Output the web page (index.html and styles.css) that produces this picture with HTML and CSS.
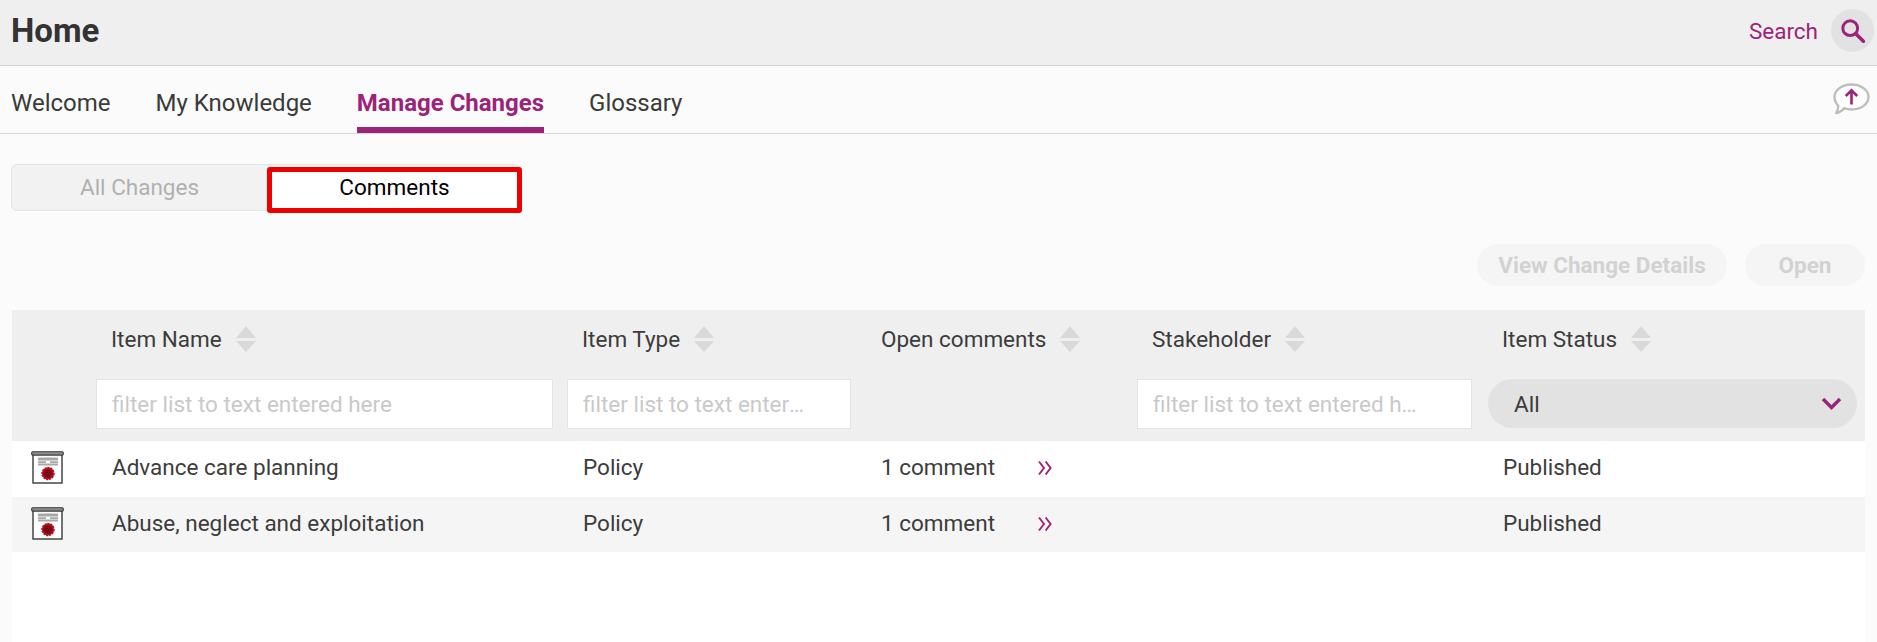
FILE: index.html
```html
<!DOCTYPE html>
<html lang="en">
<head>
<meta charset="utf-8">
<title>Home</title>
<link rel="stylesheet" href="styles.css">
</head>
<body>
<svg class="defs" width="0" height="0" aria-hidden="true">
  <symbol id="sort" viewBox="0 0 20 26">
    <path d="M10 0 L20 12 H0 Z M0 15 H20 L10 26 Z" fill="#d9d9d9"/>
  </symbol>
  <symbol id="doc" viewBox="0 0 33 33">
    <rect x="2" y="3" width="29" height="29" fill="#fff" stroke="#3a3a3a" stroke-width="1.4"/>
    <rect x="0.7" y="0.7" width="31.6" height="3.4" rx="1" fill="#8f8f8f" stroke="#3a3a3a" stroke-width="1.1"/>
    <path d="M7 6.5H27V9.4H7ZM7 10.2H15V12H7ZM19 10.2H27V12H19ZM7 12.4H27V14.6H7Z" fill="#a8a8a8"/>
    <circle cx="17" cy="22.5" r="6" fill="#b01020" stroke="#b01020" stroke-width="1.4" stroke-dasharray="2 1"/>
    <circle cx="17" cy="22.5" r="4.2" fill="#7d0a12"/>
  </symbol>
  <symbol id="more" viewBox="0 0 14 14">
    <path d="M1 .5 L6 7 L1 13.5 M7.6 .5 L12.6 7 L7.6 13.5" fill="none" stroke="#9b2379" stroke-width="1.9"/>
  </symbol>
</svg>

<header class="topbar">
  <h1 class="title">Home</h1>
  <div class="search">
    <span class="search-label">Search</span>
    <span class="search-btn">
      <svg width="26" height="26" viewBox="0 0 26 26" fill="none" stroke="#9b2379" stroke-linecap="round">
        <circle cx="10.2" cy="10.2" r="7.4" stroke-width="3"/>
        <path d="M15.8 15.8 L23.4 23.2" stroke-width="3.6"/>
      </svg>
    </span>
  </div>
</header>

<nav class="tabs">
  <a class="tab">Welcome</a>
  <a class="tab">My Knowledge</a>
  <a class="tab tab-active">Manage Changes</a>
  <a class="tab">Glossary</a>
  <svg class="feedback" width="37" height="32" viewBox="0 0 37 32" fill="none">
    <path d="M18.5 1.5 C28 1.5 35.5 7 35.5 14 C35.5 21 28 26.5 18.5 26.5 C15.5 26.5 13 26 11 25.2 C9 27.8 6 29.6 3.2 30 C4.8 27.8 5.4 25.4 5.2 22.6 C2.8 20.2 1.5 17.2 1.5 14 C1.5 7 9 1.5 18.5 1.5 Z" fill="#fff" stroke="#bdbdbd" stroke-width="2.4" stroke-linejoin="round"/>
    <path d="M18.5 21.5 V7.5 M12.8 13 L18.5 7.3 L24.2 13" stroke="#9b2379" stroke-width="2.6"/>
  </svg>
</nav>

<main class="main">
  <div class="segment">
    <span class="seg seg-off">All Changes</span>
    <span class="seg seg-on">Comments</span>
  </div>

  <div class="actions">
    <span class="btn btn-wide">View Change Details</span>
    <span class="btn btn-narrow">Open</span>
  </div>

  <section class="table">
    <div class="row head">
      <span></span>
      <span class="th">Item Name <svg class="sort"><use href="#sort"/></svg></span>
      <span class="th">Item Type <svg class="sort"><use href="#sort"/></svg></span>
      <span class="th th-c">Open comments <svg class="sort"><use href="#sort"/></svg></span>
      <span class="th">Stakeholder <svg class="sort"><use href="#sort"/></svg></span>
      <span class="th th-s">Item Status <svg class="sort"><use href="#sort"/></svg></span>
    </div>
    <div class="row filters">
      <span></span>
      <input class="filter" placeholder="filter list to text entered here">
      <input class="filter" placeholder="filter list to text entered here">
      <span></span>
      <input class="filter filter-s" placeholder="filter list to text entered here">
      <div class="select">
        <span>All</span>
        <svg width="21" height="13" viewBox="0 0 21 13" fill="none"><path d="M2 2 L10.5 10.5 L19 2" stroke="#9b2379" stroke-width="3.4"/></svg>
      </div>
    </div>
    <div class="row item">
      <svg class="doc"><use href="#doc"/></svg>
      <span class="td">Advance care planning</span>
      <span class="td">Policy</span>
      <span class="td td-c"><span class="count">1 comment</span><svg class="more"><use href="#more"/></svg></span>
      <span class="td"></span>
      <span class="td td-s">Published</span>
    </div>
    <div class="row item alt">
      <svg class="doc"><use href="#doc"/></svg>
      <span class="td">Abuse, neglect and exploitation</span>
      <span class="td">Policy</span>
      <span class="td td-c"><span class="count">1 comment</span><svg class="more"><use href="#more"/></svg></span>
      <span class="td"></span>
      <span class="td td-s">Published</span>
    </div>
  </section>
</main>
</body>
</html>
```
FILE: styles.css
```css
* { box-sizing: border-box; }
html, body { height: 100%; }
body {
  margin: 0;
  background: #fbfbfb;
  color: #3c3c3c;
  font-family: Roboto, "Liberation Sans", sans-serif;
  overflow: hidden;
  display: flex;
  flex-direction: column;
}
.defs { position: absolute; }

.topbar {
  height: 66px;
  flex: none;
  background: #efefef;
  border-bottom: 1px solid #d2d2d2;
  display: flex;
  align-items: center;
  justify-content: space-between;
  padding: 0 3px 4px 11px;
}
.title { margin: 0; font-size: 33px; font-weight: 700; color: #333; }
.search { display: flex; align-items: center; gap: 13px; }
.search-label { color: #9b2379; font-size: 22.5px; }
.search-btn {
  width: 43px; height: 43px; border-radius: 50%;
  background: #e2e2e2;
  display: flex; align-items: center; justify-content: center;
}

.tabs {
  height: 68px;
  flex: none;
  border-bottom: 1px solid #d6d6d6;
  display: flex;
  gap: 45px;
  padding-left: 11px;
}
.tab {
  font-size: 24px;
  line-height: 75px;
  height: 67px;
  color: #3a3a3a;
}
.tab-active {
  color: #9b2379;
  font-weight: 700;
  border-bottom: 6px solid #9b2379;
}
.feedback { margin-left: auto; margin-top: 17px; margin-right: 7px; }

.main { flex: 1; display: flex; flex-direction: column; padding: 30px 12px 0 11px; min-height: 0; }

.segment {
  width: 510px;
  height: 47px;
  flex: none;
  display: flex;
  background: #f2f2f2;
  border: 1px solid #e4e4e4;
  border-radius: 6px;
}
.seg { display: flex; align-items: center; justify-content: center; font-size: 22.5px; flex: none; }
.seg-off { width: 255px; color: #b0b0b0; padding-bottom: 1px; }
.seg-on {
  width: 255px;
  height: 46px;
  margin-top: 2px;
  padding-bottom: 6px;
  background: #fff;
  color: #000;
  border: 5px solid #ee0000;
  border-radius: 3px;
}

.actions { display: flex; justify-content: flex-end; gap: 18px; margin-top: 33px; flex: none; }
.btn {
  height: 42px;
  border-radius: 21px;
  background: #f5f5f5;
  color: #d2d2d2;
  font-weight: 700;
  font-size: 22.5px;
  display: flex; align-items: center; justify-content: center;
}
.btn-wide { width: 250px; }
.btn-narrow { width: 120px; }

.table { margin-top: 24px; flex: 1; background: #fff; margin-left: 1px; }
.row {
  display: grid;
  grid-template-columns: 84px 471px 298px 272px 351px 1fr;
  align-items: center;
}
.head { background: #efefef; height: 58px; }
.filters { background: #efefef; height: 73px; padding-bottom: 2px; }
.th {
  padding-left: 15px;
  font-size: 22.5px;
  display: flex; align-items: center; gap: 14px;
  color: #3c3c3c;
}
.th-c { padding-left: 16px; }
.th-s { padding-left: 14px; }
.sort { width: 20px; height: 26px; }

.filter {
  width: calc(100% - 14px);
  height: 50px;
  border: 1px solid #e3e3e3;
  background: #fff;
  padding: 0 44px 0 15px;
  font-family: inherit;
  font-size: 22.5px;
  outline: 0;
  text-overflow: ellipsis;
}
.filter-s { width: calc(100% - 16px); }
.filter::placeholder { color: #c9c9c9; opacity: 1; }

.select {
  width: 369px;
  height: 49px;
  border-radius: 25px;
  background: #e2e2e2;
  display: flex; align-items: center; justify-content: space-between;
  padding: 0 15px 0 26px;
  font-size: 22.5px;
}

.item { height: 55.5px; padding-bottom: 3px; }
.alt { background: #f5f5f5; padding-bottom: 2px; }
.doc { width: 33px; height: 33px; margin-left: 19px; margin-top: 1px; }
.td { padding-left: 16px; font-size: 22.5px; color: #3c3c3c; }
.td-c { display: flex; align-items: center; }
.td-s { padding-left: 15px; }
.count { width: 157px; }
.more { width: 14px; height: 14px; margin-top: 2px; }
```
